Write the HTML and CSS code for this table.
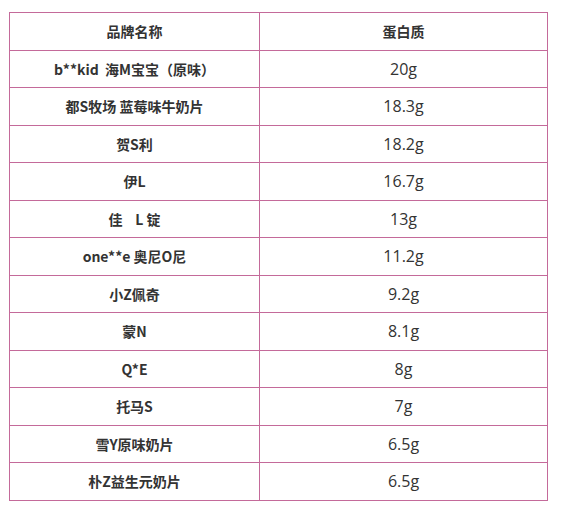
FILE: index.html
```html
<!DOCTYPE html>
<html lang="zh">
<head>
<meta charset="utf-8">
<title>蛋白质含量</title>
<link rel="stylesheet" href="styles.css">
</head>
<body>
<table class="grid">
  <thead>
    <tr><th class="name">品牌名称</th><th class="val">蛋白质</th></tr>
  </thead>
  <tbody>
    <tr><td class="name">b**kid&nbsp; 海M宝宝（原味）</td><td class="val">20g</td></tr>
    <tr><td class="name">都S牧场 蓝莓味牛奶片</td><td class="val">18.3g</td></tr>
    <tr><td class="name">贺S利</td><td class="val">18.2g</td></tr>
    <tr><td class="name">伊L</td><td class="val">16.7g</td></tr>
    <tr><td class="name">佳&nbsp;&nbsp;&nbsp; L 锭</td><td class="val">13g</td></tr>
    <tr><td class="name">one**e 奥尼O尼</td><td class="val">11.2g</td></tr>
    <tr><td class="name">小Z佩奇</td><td class="val">9.2g</td></tr>
    <tr><td class="name">蒙N</td><td class="val">8.1g</td></tr>
    <tr><td class="name">Q*E</td><td class="val">8g</td></tr>
    <tr><td class="name">托马S</td><td class="val">7g</td></tr>
    <tr><td class="name">雪Y原味奶片</td><td class="val">6.5g</td></tr>
    <tr><td class="name">朴Z益生元奶片</td><td class="val">6.5g</td></tr>
  </tbody>
</table>
</body>
</html>
```

FILE: styles.css
```css
html, body {
  margin: 0;
  padding: 0;
  background: #ffffff;
}
body {
  padding: 12px 0 0 9px;
  font-family: "Noto Sans CJK SC", "Noto Sans", sans-serif;
  color: #333333;
}
.grid {
  border-collapse: collapse;
  width: 539px;
  table-layout: fixed;
}
.grid th, .grid td {
  border: 1px solid #c46a9a;
  height: 36.5px;
  padding: 0;
  text-align: center;
  vertical-align: middle;
  line-height: 20px;
}
.grid .name {
  width: 249px;
  font-weight: bold;
  font-size: 14px;
}
.grid th.val {
  font-weight: bold;
  font-size: 14px;
}
.grid td.val {
  font-family: "Open Sans", "Noto Sans CJK SC", sans-serif;
  font-weight: normal;
  font-size: 16px;
}
```
